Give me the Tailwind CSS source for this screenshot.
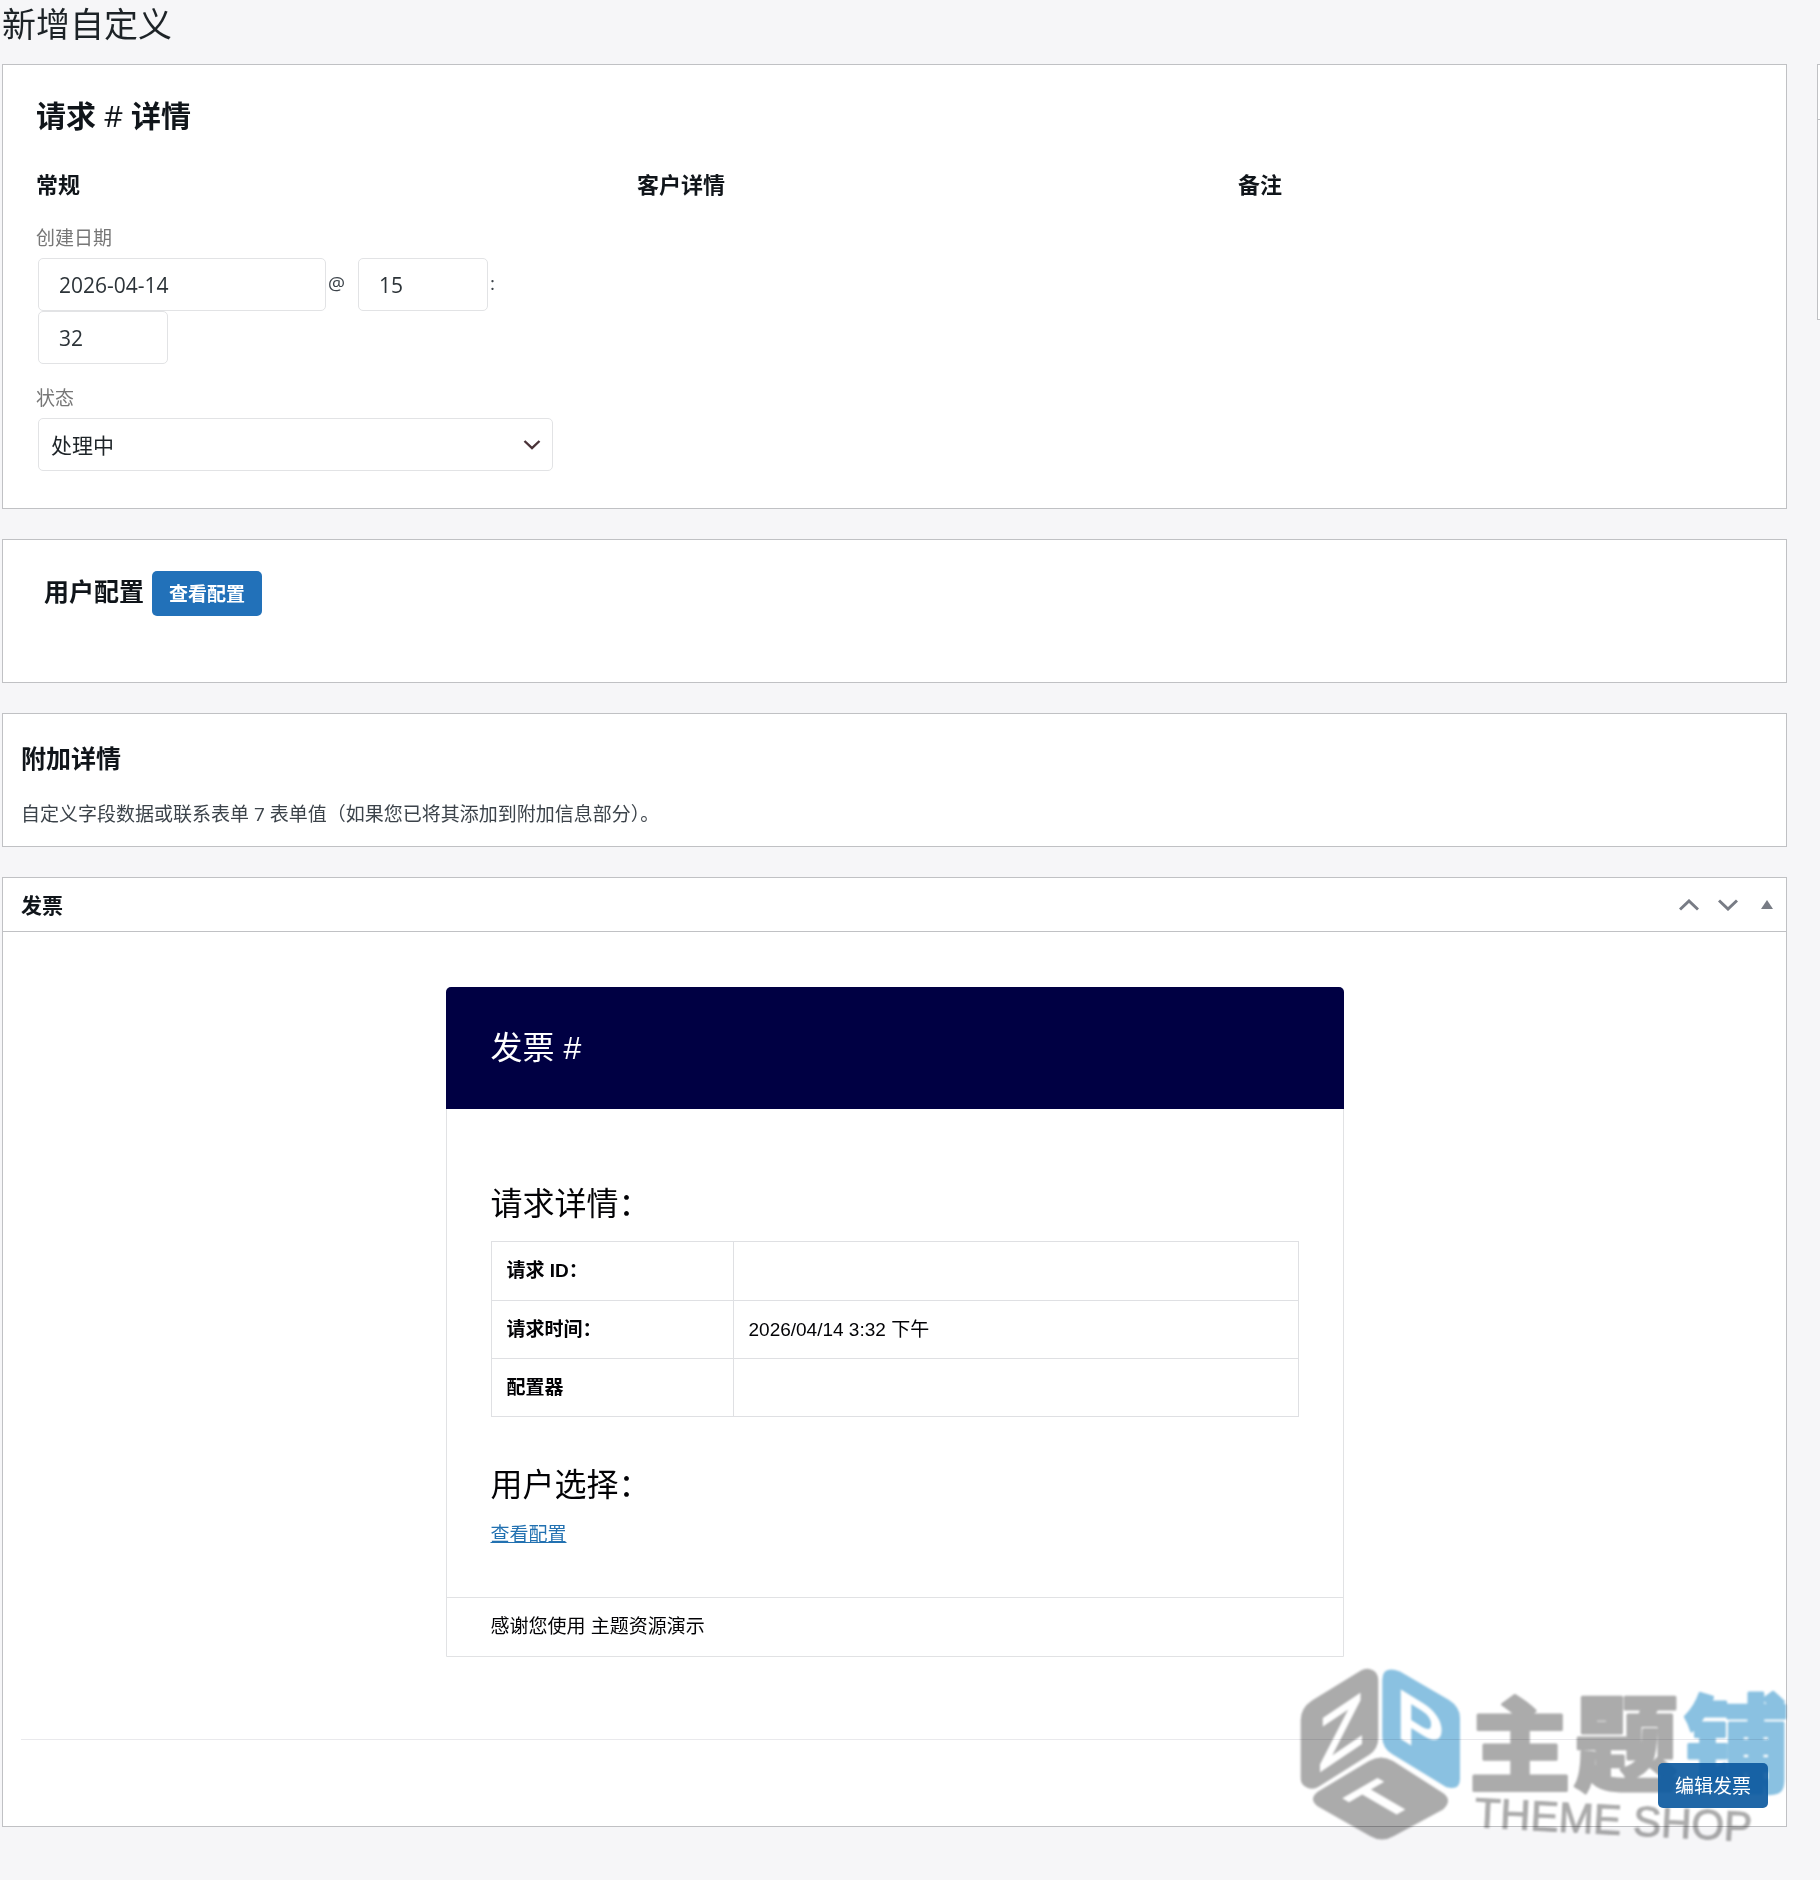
<!DOCTYPE html>
<html lang="zh-CN">
<head>
    <meta charset="UTF-8">
    <meta name="viewport" content="width=device-width, initial-scale=1.0">
    <title>新增自定义</title>
    <script src="https://cdn.jsdelivr.net/npm/@tailwindcss/browser@4"></script>
</head>
<body class="min-h-screen bg-[#f6f6f8] pl-0.5 font-['Open_Sans','Noto_Sans_CJK_SC',sans-serif] text-[19px] leading-[30px] text-[#3c434a]">
    <h1 class="h-16 pt-1 text-[34px] leading-10 text-[#1d2327]">新增自定义</h1>

    <div class="flex items-start gap-[30px]">
        <main class="flex min-w-0 flex-1 flex-col gap-[30px]">
            <!-- Request details -->
            <section class="border border-[#c0c1c4] bg-white px-[33px] pt-[31px] pb-[37px]">
                <h2 class="text-[30px] leading-10 font-bold text-[#10151a]">请求 <span class="font-normal">#</span> 详情</h2>
                <div class="mt-7 grid grid-cols-[35%_35%_30%]">
                    <div>
                        <h3 class="text-[22px] leading-10 font-bold text-[#10151a]">常规</h3>
                        <form class="mt-[19px]">
                            <label for="date" class="block text-[#777]">创建日期</label>
                            <div class="mt-[5px] flex flex-wrap items-center pl-0.5">
                                <input id="date" type="text" value="2026-04-14" class="h-[53px] w-[288px] rounded-[5px] border border-[#e2e3e5] px-5 text-[21px] text-[#2c3338]">
                                <span class="w-8 pb-1 pl-0.5">@</span>
                                <input type="text" aria-label="时" value="15" class="h-[53px] w-[130px] rounded-[5px] border border-[#e2e3e5] px-5 text-[21px] text-[#2c3338]">
                                <span class="pb-1 pl-0.5">:</span>
                                <span class="w-full"></span>
                                <input type="text" aria-label="分" value="32" class="h-[53px] w-[130px] rounded-[5px] border border-[#e2e3e5] px-5 text-[21px] text-[#2c3338]">
                            </div>
                            <label for="status" class="mt-[19px] block text-[#777]">状态</label>
                            <div class="relative mt-[5px] ml-0.5 w-[515px]">
                                <select id="status" class="h-[53px] w-full appearance-none rounded-[5px] border border-[#e2e3e5] bg-white px-3 text-[21px] text-[#1d2327]">
                                    <option>处理中</option>
                                </select>
                                <svg class="pointer-events-none absolute top-[21px] right-3 h-3 w-[18px]" viewBox="0 0 18 12" fill="none" stroke="#4a3338" stroke-width="2.4"><path d="M1.500 2 9 9.200 16.500 2"/></svg>
                            </div>
                        </form>
                    </div>
                    <h3 class="text-[22px] leading-10 font-bold text-[#10151a]">客户详情</h3>
                    <h3 class="text-[22px] leading-10 font-bold text-[#10151a]">备注</h3>
                </div>
            </section>

            <!-- User configuration -->
            <section class="h-36 border border-[#c0c1c4] bg-white px-[41px] pt-[31px]">
                <div class="flex items-start gap-2">
                    <h2 class="text-[25px] leading-10 font-bold text-[#10151a]">用户配置</h2>
                    <button type="button" class="h-[45px] rounded-[5px] bg-[#2271b9] px-[17px] font-bold text-white">查看配置</button>
                </div>
            </section>

            <!-- Additional details -->
            <section class="border border-[#c0c1c4] bg-white px-[18px] pt-6 pb-[17px]">
                <h2 class="text-[25px] leading-10 font-bold text-[#10151a]">附加详情</h2>
                <p class="mt-[21px]">自定义字段数据或联系表单 7 表单值（如果您已将其添加到附加信息部分）。</p>
            </section>

            <!-- Invoice -->
            <section class="relative border border-[#c0c1c4] bg-white">
                <header class="flex h-[54px] items-center border-b border-[#c0c1c4] pl-[18px]">
                    <h2 class="flex-1 text-[21px] font-bold text-[#10151a]">发票</h2>
                    <button type="button" aria-label="上移" class="flex w-[39px] justify-center">
                        <svg class="h-3 w-5" viewBox="0 0 20 12" fill="none" stroke="#787c85" stroke-width="3"><path d="M1 10.500 10 2 19 10.500"/></svg>
                    </button>
                    <button type="button" aria-label="下移" class="flex w-[39px] justify-center">
                        <svg class="h-3 w-5" viewBox="0 0 20 12" fill="none" stroke="#787c85" stroke-width="3"><path d="M1 1.500 10 10 19 1.500"/></svg>
                    </button>
                    <button type="button" aria-label="切换" class="flex w-[39px] justify-center">
                        <svg class="h-[9px] w-3" viewBox="0 0 12 9" fill="#787c85"><path d="M6 0 12 9H0z"/></svg>
                    </button>
                </header>

                <div class="px-[18px] pt-[55px] pb-[18px]">
                    <div class="mx-auto max-w-[898px] rounded-t-[5px] border border-[#e1e2e4] font-['Liberation_Sans','Noto_Sans_CJK_SC',sans-serif] text-[#020205]">
                        <div class="-mx-px -mt-px rounded-t-[5px] bg-[#000043] px-[45px] py-[41px] text-[32px] leading-10 text-white">发票 #</div>
                        <div class="px-11 pt-[75px] pb-[47px]">
                            <h3 class="text-[32px] leading-10">请求详情：</h3>
                            <table class="mt-[17px] w-full border-collapse text-left">
                                <tbody>
                                    <tr class="h-[59px]">
                                        <th class="w-[242px] border border-[#dfe0e3] px-[15px] font-bold">请求 ID：</th>
                                        <td class="border border-[#dfe0e3] px-[15px]"></td>
                                    </tr>
                                    <tr class="h-[58px]">
                                        <th class="border border-[#dfe0e3] px-[15px] font-bold">请求时间：</th>
                                        <td class="border border-[#dfe0e3] px-[15px]">2026/04/14 3:32 下午</td>
                                    </tr>
                                    <tr class="h-[58px]">
                                        <th class="border border-[#dfe0e3] px-[15px] font-bold">配置器</th>
                                        <td class="border border-[#dfe0e3] px-[15px]"></td>
                                    </tr>
                                </tbody>
                            </table>
                            <h3 class="mt-12 text-[32px] leading-10">用户选择：</h3>
                            <a href="#" class="mt-[15px] block w-fit text-[#2271b1] underline">查看配置</a>
                        </div>
                        <div class="border-t border-[#e1e2e4] px-11 py-[14px]">感谢您使用 主题资源演示</div>
                    </div>

                    <div class="mt-[82px] flex justify-end border-t border-[#e9e9ec] pt-[23px]">
                        <button type="button" class="relative z-10 h-[45px] rounded-[5px] bg-[#0d5aa0]/92 px-[17px] text-white">编辑发票</button>
                    </div>
                </div>

                <!-- Theme Shop watermark -->
                <svg class="pointer-events-none absolute right-0 -bottom-7 h-[190px] w-[486px] overflow-visible mix-blend-multiply blur-[1px]" viewBox="0 0 486 190" aria-hidden="true">
                    <g fill="#ababab">
                        <path d="M61 6.500Q66 3.500 71 5.500 78.300 8 78.300 16V74Q78.300 85 69 91L19 122.500Q12 127 5 122.500 .700 120 .700 114V56Q.700 44 12 36.500Z"/>
                        <path d="M69 97Q81 90 93 97L143 129Q153 136 143 145.500L94 172Q82 179 70 172L18 142.500Q8 135 18 127.500Z"/>
                    </g>
                    <path fill="#8ac1e1" d="M100 7.500 149 36Q160 43 160 54V115Q160 127 146 123L92 90Q82.300 84 82.300 73V16Q82.300 1 100 7.500Z"/>
                    <g fill="#fff" font-family="Liberation Sans" font-weight="700" text-anchor="middle">
                        <text font-size="76" transform="translate(41 94) skewY(-34)">Z</text>
                        <text font-size="72" transform="translate(120 87) skewY(32)">P</text>
                        <text font-size="72" transform="translate(101 148) matrix(.83 -.48 .83 .48 0 0)">T</text>
                    </g>
                    <g font-family="Noto Sans CJK SC" font-weight="900" stroke-width="3" stroke-linejoin="round">
                        <text x="169" y="120" font-size="102" fill="#ababab" stroke="#ababab">主</text>
                        <text x="274" y="119" font-size="104" fill="#ababab" stroke="#ababab">题</text>
                        <text x="384" y="119" font-size="105" fill="#8ac1e1" stroke="#8ac1e1">铺</text>
                    </g>
                    <text x="174" y="163" font-family="Liberation Sans" font-size="42" fill="#ababab" stroke="#ababab" transform="rotate(3 174 163)">THEME SHOP</text>
                </svg>
            </section>
        </main>

        <!-- Side column, its boxes run past the window's right edge -->
        <aside class="w-[3px] shrink-0">
            <div class="h-64 border border-r-0 border-[#c0c1c4] bg-white">
                <div class="h-[55px] border-b border-[#c0c1c4]"></div>
            </div>
        </aside>
    </div>
</body>
</html>
